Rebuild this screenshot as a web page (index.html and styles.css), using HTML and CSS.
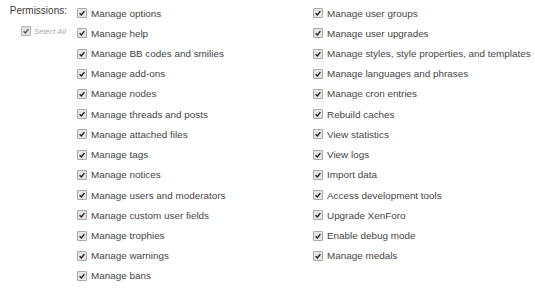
FILE: index.html
```html
<!DOCTYPE html>
<html>
<head>
<meta charset="utf-8">
<link rel="stylesheet" href="styles.css">
</head>
<body>
<div class="ctrl">
  <div class="label-col">
    <div class="label">Permissions:</div>
    <div class="select-all"><span class="cb"><svg viewBox="0 0 10 10"><path d="M2 5.2 L4.2 7.4 L8 2.6" /></svg></span><span class="sa-text">Select All</span></div>
  </div>
  <div class="cols">
    <ul class="list col1">
      <li><span class="cb"><svg viewBox="0 0 10 10"><path d="M2 5.2 L4.2 7.4 L8 2.6" /></svg></span>Manage options</li>
      <li><span class="cb"><svg viewBox="0 0 10 10"><path d="M2 5.2 L4.2 7.4 L8 2.6" /></svg></span>Manage help</li>
      <li><span class="cb"><svg viewBox="0 0 10 10"><path d="M2 5.2 L4.2 7.4 L8 2.6" /></svg></span>Manage BB codes and smilies</li>
      <li><span class="cb"><svg viewBox="0 0 10 10"><path d="M2 5.2 L4.2 7.4 L8 2.6" /></svg></span>Manage add-ons</li>
      <li><span class="cb"><svg viewBox="0 0 10 10"><path d="M2 5.2 L4.2 7.4 L8 2.6" /></svg></span>Manage nodes</li>
      <li><span class="cb"><svg viewBox="0 0 10 10"><path d="M2 5.2 L4.2 7.4 L8 2.6" /></svg></span>Manage threads and posts</li>
      <li><span class="cb"><svg viewBox="0 0 10 10"><path d="M2 5.2 L4.2 7.4 L8 2.6" /></svg></span>Manage attached files</li>
      <li><span class="cb"><svg viewBox="0 0 10 10"><path d="M2 5.2 L4.2 7.4 L8 2.6" /></svg></span>Manage tags</li>
      <li><span class="cb"><svg viewBox="0 0 10 10"><path d="M2 5.2 L4.2 7.4 L8 2.6" /></svg></span>Manage notices</li>
      <li><span class="cb"><svg viewBox="0 0 10 10"><path d="M2 5.2 L4.2 7.4 L8 2.6" /></svg></span>Manage users and moderators</li>
      <li><span class="cb"><svg viewBox="0 0 10 10"><path d="M2 5.2 L4.2 7.4 L8 2.6" /></svg></span>Manage custom user fields</li>
      <li><span class="cb"><svg viewBox="0 0 10 10"><path d="M2 5.2 L4.2 7.4 L8 2.6" /></svg></span>Manage trophies</li>
      <li><span class="cb"><svg viewBox="0 0 10 10"><path d="M2 5.2 L4.2 7.4 L8 2.6" /></svg></span>Manage warnings</li>
      <li><span class="cb"><svg viewBox="0 0 10 10"><path d="M2 5.2 L4.2 7.4 L8 2.6" /></svg></span>Manage bans</li>
    </ul>
    <ul class="list col2">
      <li><span class="cb"><svg viewBox="0 0 10 10"><path d="M2 5.2 L4.2 7.4 L8 2.6" /></svg></span>Manage user groups</li>
      <li><span class="cb"><svg viewBox="0 0 10 10"><path d="M2 5.2 L4.2 7.4 L8 2.6" /></svg></span>Manage user upgrades</li>
      <li><span class="cb"><svg viewBox="0 0 10 10"><path d="M2 5.2 L4.2 7.4 L8 2.6" /></svg></span>Manage styles, style properties, and templates</li>
      <li><span class="cb"><svg viewBox="0 0 10 10"><path d="M2 5.2 L4.2 7.4 L8 2.6" /></svg></span>Manage languages and phrases</li>
      <li><span class="cb"><svg viewBox="0 0 10 10"><path d="M2 5.2 L4.2 7.4 L8 2.6" /></svg></span>Manage cron entries</li>
      <li><span class="cb"><svg viewBox="0 0 10 10"><path d="M2 5.2 L4.2 7.4 L8 2.6" /></svg></span>Rebuild caches</li>
      <li><span class="cb"><svg viewBox="0 0 10 10"><path d="M2 5.2 L4.2 7.4 L8 2.6" /></svg></span>View statistics</li>
      <li><span class="cb"><svg viewBox="0 0 10 10"><path d="M2 5.2 L4.2 7.4 L8 2.6" /></svg></span>View logs</li>
      <li><span class="cb"><svg viewBox="0 0 10 10"><path d="M2 5.2 L4.2 7.4 L8 2.6" /></svg></span>Import data</li>
      <li><span class="cb"><svg viewBox="0 0 10 10"><path d="M2 5.2 L4.2 7.4 L8 2.6" /></svg></span>Access development tools</li>
      <li><span class="cb"><svg viewBox="0 0 10 10"><path d="M2 5.2 L4.2 7.4 L8 2.6" /></svg></span>Upgrade XenForo</li>
      <li><span class="cb"><svg viewBox="0 0 10 10"><path d="M2 5.2 L4.2 7.4 L8 2.6" /></svg></span>Enable debug mode</li>
      <li><span class="cb"><svg viewBox="0 0 10 10"><path d="M2 5.2 L4.2 7.4 L8 2.6" /></svg></span>Manage medals</li>
    </ul>
  </div>
</div>
</body>
</html>
```
FILE: styles.css
```css
html, body {
  margin: 0;
  padding: 0;
  background: #ffffff;
}
body {
  font-family: "Liberation Sans", Arial, sans-serif;
  color: #333333;
}
.ctrl {
  display: flex;
  padding-top: 3px;
}
.label-col {
  width: 67px;
  display: flex;
  flex-direction: column;
  align-items: flex-end;
}
.label {
  font-size: 10px;
  color: #3a3a3a;
  height: 18px;
  line-height: 16px;
}
.select-all {
  display: flex;
  align-items: center;
  height: 20px;
  margin-top: 0;
  margin-right: 1px;
}
.sa-text {
  font-size: 7.8px;
  font-style: italic;
  color: #aaaaaa;
  margin-left: 3px;
}
.select-all .cb {
  margin-right: 0;
  margin-left: 0;
  background: #e2e2e2;
  border-color: #b4b4b4;
}
.select-all .cb path {
  stroke: #555555;
}
.cols {
  display: flex;
  margin-left: 10px;
}
.list {
  list-style: none;
  margin: 0;
  padding: 0;
}
.col1 {
  width: 236px;
}
.list li {
  display: flex;
  align-items: center;
  height: 20.23px;
  font-size: 9.9px;
  color: #454545;
  white-space: nowrap;
}
.cb {
  display: inline-block;
  width: 8px;
  height: 8px;
  border: 1px solid #a8a8a8;
  background: #e6e6e6;
  border-radius: 1px;
  margin-right: 4px;
  flex: none;
}
.cb svg {
  display: block;
  width: 8px;
  height: 8px;
}
.cb path {
  fill: none;
  stroke: #222222;
  stroke-width: 1.8;
}
```
